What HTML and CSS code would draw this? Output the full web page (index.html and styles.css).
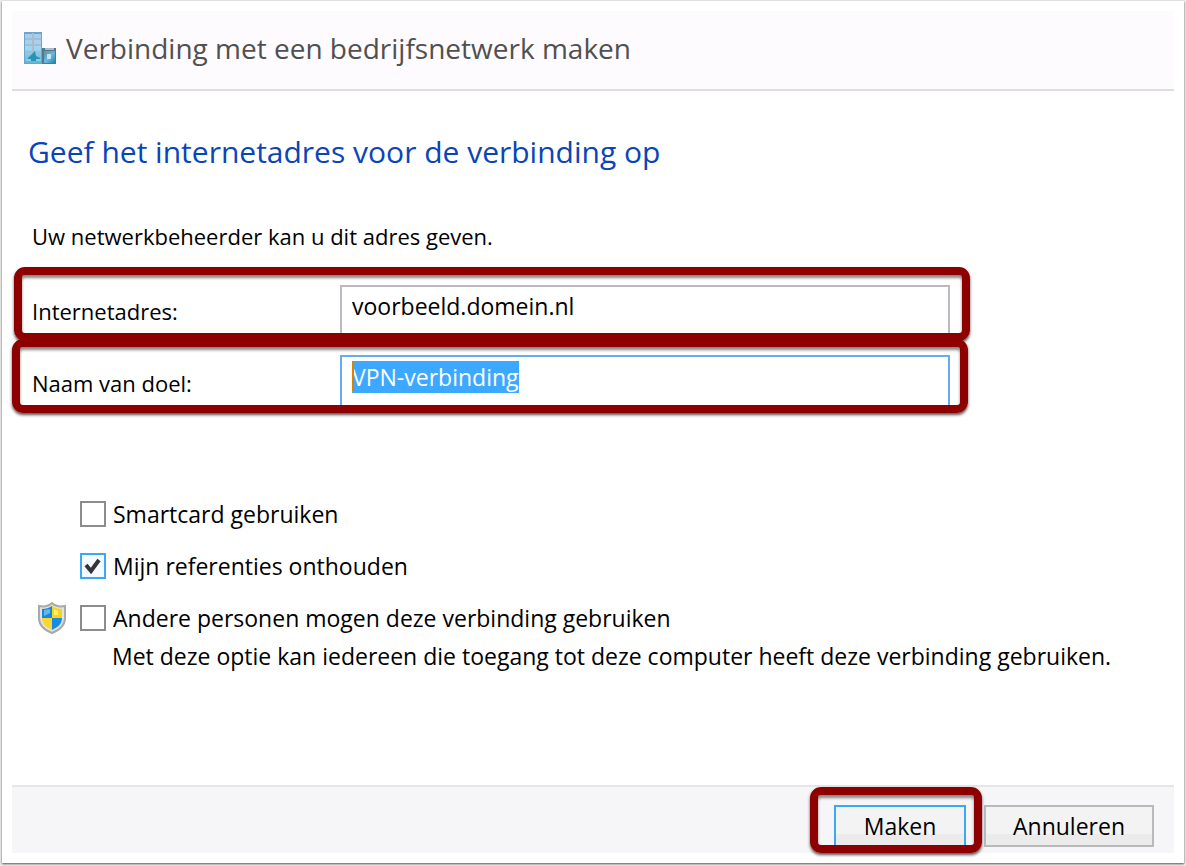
FILE: index.html
```
<!DOCTYPE html>
<html lang="nl">
<head>
<meta charset="utf-8">
<title>Verbinding met een bedrijfsnetwerk maken</title>
<link rel="stylesheet" href="styles.css">
</head>
<body>
<form class="window">
  <header class="titlebar">
    <svg class="title-icon" viewBox="0 0 32 32" aria-hidden="true">
      <defs>
        <linearGradient id="tower" x1="0" y1="0" x2="0" y2="1">
          <stop offset="0" stop-color="#a9cbee"/><stop offset=".5" stop-color="#9bd8f5"/><stop offset="1" stop-color="#5fb4d4"/>
        </linearGradient>
        <linearGradient id="annex" x1="0" y1="0" x2="1" y2="1">
          <stop offset="0" stop-color="#6a8494"/><stop offset=".5" stop-color="#63bde6"/><stop offset="1" stop-color="#2c7fa6"/>
        </linearGradient>
      </defs>
      <path fill="#6aa6c8" d="M0 0h18v32H0z"/>
      <path fill="url(#tower)" d="M1 2h16v29H1z"/>
      <path fill="none" stroke="#a9bccb" stroke-width="2" d="M9 1v19M1 7h16M1 13h16M1 20h16"/>
      <path fill="#2a93b4" d="M4 26l5-5 2-2 1 5 4 2v3H4z"/>
      <path fill="#8fcbe2" d="M2 27h5v2H2zM12 27h5v2h-5z"/>
      <path fill="#50788f" d="M18 16h14v16H18z"/>
      <path fill="url(#annex)" d="M20 19h11v12H20z"/>
      <path fill="#a8bcc6" d="M21 16h9v2h-9z"/>
      <path fill="#bce6f7" d="M23 22h4v5h-4z"/>
      <path fill="none" stroke="#7f9dab" d="M20 20h11"/>
    </svg>
    <h1 class="title">Verbinding met een bedrijfsnetwerk maken</h1>
  </header>

  <main class="content">
    <h2 class="heading">Geef het internetadres voor de verbinding op</h2>
    <p class="intro">Uw netwerkbeheerder kan u dit adres geven.</p>

    <div class="fields">
      <div class="field marked">
        <label class="field-label" for="address">Internetadres:</label>
        <input class="field-input" id="address" type="text" value="voorbeeld.domein.nl">
      </div>
      <div class="field field-active marked">
        <label class="field-label" for="name">Naam van doel:</label>
        <input class="field-input" id="name" type="text" value="VPN-verbinding">
        <span class="caret"></span>
      </div>
    </div>

    <div class="options">
      <div class="option">
        <input class="check" type="checkbox" id="smartcard">
        <label for="smartcard">Smartcard gebruiken</label>
      </div>
      <div class="option">
        <input class="check" type="checkbox" id="remember" checked>
        <label for="remember">Mijn referenties onthouden</label>
      </div>
      <div class="option">
        <svg class="shield" viewBox="0 0 28 32" aria-hidden="true">
          <path fill="#e2e2e2" stroke="#a9a9a9" stroke-width="2" d="M14 1c3 3 8 4 13 3v12c0 7-5 12-13 15C6 28 1 23 1 16V4c5 1 10 0 13-3z"/>
          <path fill="#1b86dc" d="M14 4v12H4V7c4 0 7-1 10-3z"/>
          <path fill="#62b8ee" d="M12 7v4l-6 3V8z"/>
          <path fill="#f8d31c" d="M14 4c3 2 6 3 10 3v9H14z"/>
          <path fill="#fff06a" d="M16 7l4 2v4h-4z"/>
          <path fill="#f9d829" d="M4 16h10v12C8 25 4 22 4 16z"/>
          <path fill="#168be3" d="M14 16h10c0 6-4 9-10 12z"/>
        </svg>
        <input class="check" type="checkbox" id="shared" aria-describedby="shared-note">
        <label for="shared">Andere personen mogen deze verbinding gebruiken</label>
      </div>
      <p class="note" id="shared-note">Met deze optie kan iedereen die toegang tot deze computer heeft deze verbinding gebruiken.</p>
    </div>
  </main>

  <footer class="actions">
    <div class="marked primary-mark">
      <button class="button button-primary" type="submit">Maken</button>
    </div>
    <button class="button" type="button">Annuleren</button>
  </footer>
</form>
<script src="script.js"></script>
</body>
</html>
```
FILE: styles.css
```
* { box-sizing: border-box; }

body {
  margin: 0;
  background: #ebebeb;
  color: #000;
  font-family: "Open Sans", "Noto Sans", sans-serif;
  font-size: 23px;
  line-height: 32px;
}

h1, h2, p { margin: 0; font-weight: 400; }

input, button { font: inherit; color: inherit; }

.window {
  display: flex;
  flex-direction: column;
  min-height: calc(100vh - 4px);
  margin: 1px 2px 3px;
  padding: 10px;
  background: #fff;
  box-shadow: 0 1px 2px #555;
}

.titlebar {
  display: flex;
  align-items: center;
  gap: 10px;
  height: 80px;
  padding: 0 12px 4px;
  background: #fdfbfe;
  border-bottom: 2px solid #e0dde1;
}

.title-icon { width: 32px; height: 32px; flex: none; }

.title {
  font-size: 28px;
  line-height: 40px;
  color: #505050;
}

.content { flex: 1; }

.heading {
  margin: 41px 16px 0;
  font-size: 30px;
  line-height: 40px;
  color: #0a45b8;
}

.intro { margin: 48px 20px 0; font-size: 22px; }

.fields { max-width: 958px; margin-top: 15px; }

.marked {
  border: 8px solid #8e0000;
  border-radius: 11px;
  box-shadow: 0 2px 3px #555, inset 0 3px 3px #888;
}

.field {
  display: flex;
  height: 74px;
  margin-left: 2px;
  padding: 10px 12px 0 10px;
}

.field-active {
  position: relative;
  margin: -2px 2px 0 0;
  padding: 8px 10px 0 12px;
}

.field-label { width: 308px; padding-top: 10px; font-size: 22px; }

.field-active .field-label { padding-top: 12px; }

.field-input {
  flex: 1;
  min-width: 0;
  padding: 0 10px 8px;
  border: 2px solid #bbbac2;
  border-bottom: 0;
  border-radius: 0;
  background: #fff;
  outline: none;
}

.field-active .field-input { border-color: #66adf0; }

.field-input::selection { background: #3ca8ff; color: #fff; }

.caret {
  position: absolute;
  top: 14px;
  left: 332px;
  width: 2px;
  height: 30px;
  background: #dc8200;
}

.options { margin: 85px 20px 0 100px; }

.option {
  position: relative;
  display: flex;
  align-items: center;
  gap: 7px;
  height: 32px;
  margin: 0 0 20px -32px;
}

.check {
  appearance: none;
  width: 26px;
  height: 26px;
  margin: 0;
  flex: none;
  border: 2px solid #8c8c8c;
  background: #fff;
}

.check:checked {
  border-color: #3da6f5;
  background: #f4faff url("data:image/svg+xml,%3Csvg xmlns='http://www.w3.org/2000/svg' viewBox='0 0 22 22'%3E%3Cpath d='M4 10l5 6 8-11' fill='none' stroke='%23333338' stroke-width='4'/%3E%3C/svg%3E");
}

.shield {
  position: absolute;
  right: 100%;
  width: 28px;
  height: 32px;
  margin-right: 14px;
}

.note { margin-top: -14px; }

.actions {
  display: flex;
  justify-content: flex-end;
  align-items: flex-start;
  gap: 2px;
  height: 68px;
  padding-right: 20px;
  background: #f6f5f8;
  border-top: 2px solid #e6e6e6;
}

.primary-mark { padding: 10px 8px 0 16px; }

.button {
  width: 170px;
  height: 42px;
  margin-top: 18px;
  padding: 0;
  border: 2px solid #b9b9b9;
  background: linear-gradient(#f3f3f3 70%, #eaebea 70%);
}

.button-primary {
  display: block;
  width: 132px;
  height: 40px;
  margin: 0;
  border-color: #3da6f5;
  border-bottom: 0;
}
```
FILE: script.js
```
const nameField = document.getElementById("name");
nameField.focus();
nameField.select();
```
